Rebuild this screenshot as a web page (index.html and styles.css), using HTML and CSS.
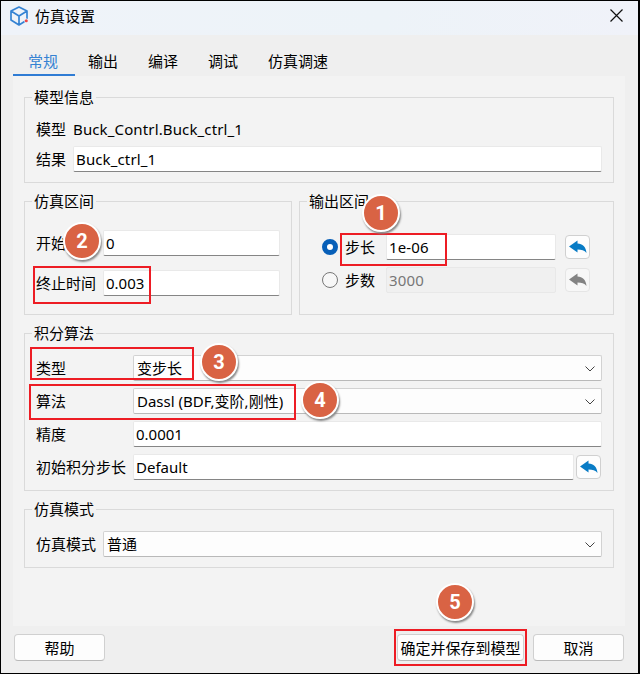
FILE: index.html
```html
<!DOCTYPE html>
<html lang="zh-CN">
<head>
<meta charset="utf-8">
<title>仿真设置</title>
<link rel="stylesheet" href="styles.css">
</head>
<body>
<svg class="defs" width="0" height="0">
  <symbol id="undo" viewBox="0 0 18 14"><path d="M0 6.500 8.500 0.500V3.500C13.500 3.500 17 7 17.500 13C15.500 10.300 12.500 9.500 8.500 9.500V12.500Z"/></symbol>
  <symbol id="chevron" viewBox="0 0 10 6"><path d="M.5.5 5 5 9.500.5" fill="none" stroke="#444"/></symbol>
</svg>
<main class="window">
  <header class="titlebar">
    <svg class="logo" viewBox="0 0 20 20"><path d="M10 1 18 5V14L10 19 2 14V5ZM2 5 10 10 18 5M10 10V19" fill="none" stroke="#3583d3" stroke-width="1.700" stroke-linejoin="round"/><circle cx="17.500" cy="14.800" r="2.300" fill="#eef3f9"/><circle cx="17.300" cy="14.800" r="1.500" fill="#f04545"/></svg>
    <h1>仿真设置</h1>
    <svg class="close" viewBox="0 0 13 13"><path d="M.5.5 12.500 12.500M12.500.5.5 12.500" stroke="#111" stroke-width="1.200"/></svg>
  </header>
  <nav class="tabs"><span class="tab active">常规</span><span class="tab">输出</span><span class="tab">编译</span><span class="tab">调试</span><span class="tab">仿真调速</span></nav>
  <section class="panel">
    <section class="group info">
      <h2>模型信息</h2>
      <div class="row model"><label>模型</label><span class="value">Buck_Contrl.Buck_ctrl_1</span></div>
      <div class="row"><label>结果</label><div class="input value">Buck_ctrl_1</div></div>
    </section>
    <div class="pair">
      <section class="group interval">
        <h2>仿真区间</h2>
        <div class="row"><label>开始时间</label><div class="input">0</div></div>
        <div class="row"><label>终止时间</label><div class="input">0.003</div></div>
      </section>
      <section class="group output">
        <h2>输出区间</h2>
        <div class="row"><i class="radio on"></i><label>步长</label><div class="input value">1e-06</div><span class="undo"><svg><use href="#undo"/></svg></span></div>
        <div class="row"><i class="radio"></i><label>步数</label><div class="input value disabled">3000</div><span class="undo off"><svg><use href="#undo"/></svg></span></div>
      </section>
    </div>
    <section class="group algorithm">
      <h2>积分算法</h2>
      <div class="row"><label>类型</label><div class="select">变步长<svg><use href="#chevron"/></svg></div></div>
      <div class="row"><label>算法</label><div class="select">Dassl (BDF,变阶,刚性)<svg><use href="#chevron"/></svg></div></div>
      <div class="row"><label>精度</label><div class="input">0.0001</div></div>
      <div class="row last"><label>初始积分步长</label><div class="input">Default</div><span class="undo"><svg><use href="#undo"/></svg></span></div>
    </section>
    <section class="group mode">
      <h2>仿真模式</h2>
      <div class="row"><label>仿真模式</label><div class="select">普通<svg><use href="#chevron"/></svg></div></div>
    </section>
  </section>
  <footer class="actions"><span class="button help">帮助</span><span class="button save">确定并保存到模型</span><span class="button">取消</span></footer>
  <div class="mark mark-end"></div><div class="mark mark-step"></div><div class="mark mark-type"></div><div class="mark mark-method"></div><div class="mark mark-save"></div>
  <b class="badge one">1</b><b class="badge two">2</b><b class="badge three">3</b><b class="badge four">4</b><b class="badge five">5</b>
</main>
</body>
</html>
```

FILE: styles.css
```css
* { box-sizing: border-box; }
body { margin: 0; font: 15px/20px "Noto Sans", "Noto Sans CJK SC", sans-serif; color: #000; background: #000; }
.defs { display: none; }
.window { position: relative; width: 640px; height: 674px; border: 1px solid #000; background: #efefef; border-right-width: 2px; overflow: hidden; display: flex; flex-direction: column; }
.titlebar { height: 34px; display: flex; align-items: center; padding: 0 15px 5px 8px; background: linear-gradient(90deg, #eff3f9, #edf3f8 60%, #f0f2f9); flex: none; }
.logo { width: 20px; height: 20px; margin-right: 6px; }
h1, h2 { font: inherit; margin: 0; }
.close { width: 13px; height: 13px; margin-left: auto; }
.tabs { height: 41px; padding: 13px 0 0 12px; display: flex; flex: none; }
.tab { padding: 1px 15px 0; height: 28px; line-height: 24px; }
.active { width: 62px; margin-right: -2px; color: #3682d3; border-bottom: 2px solid #2f7cd4; }
.panel { width: 612px; height: 550px; margin-left: 12px; padding: 21px 11px 0; background: #f3f3f3; flex: none; }
.group { border: 1px solid #dadada; position: relative; padding: 0 11px; }
.group h2 { width: max-content; height: 20px; margin: -11px 0 0 -4px; padding: 0 2px; line-height: 20px; background: #f3f3f3; }
.row { display: flex; align-items: center; height: 26px; }
.row label { flex: none; white-space: nowrap; }
.value { letter-spacing: .13px; }
.input, .select { height: 26px; flex: 1; min-width: 0; padding: 0 2px; line-height: 25px; background: #fff; border: 1px solid #e9e9e9; border-bottom: 1px solid #858585; border-radius: 2px; }
.select { display: flex; padding: 0 6px 0 3px; background: #fdfdfd; border-color: #d2d2d2; border-bottom-color: #b9b9b9; }
.select svg { width: 10px; height: 6px; margin: 10px 0 0 auto; }
.disabled { background: #f0f0f0; border-color: #e8e8e8; color: #777; }
.info { height: 86px; }
.info label { width: 37px; }
.info .model { height: 20px; margin: 12px 0 7px; }
.pair { display: flex; gap: 7px; margin-top: 18px; }
.interval { width: 268px; height: 114px; }
.interval label { width: 67px; }
.interval .row { margin-top: 14px; }
.interval h2 + .row { margin-top: 19px; }
.output { width: 315px; height: 114px; padding: 0 23px 0 22px; }
.output h2 { margin-left: -15px; }
.output .row { margin-top: 7px; }
.output h2 + .row { margin-top: 23px; }
.output label { width: 41px; }
.output .undo { margin-left: 9px; }
.radio { width: 16px; height: 16px; margin-right: 7px; flex: none; border: 1px solid #777; border-radius: 50%; background: #f7f7f7; }
.radio.on { border: 5px solid #075fb8; background: #fff; }
.undo { width: 25px; height: 24px; margin-left: 2px; border: 1px solid #d0d0d0; border-radius: 4px; background: #fdfdfd; flex: none; display: grid; place-items: center; }
.undo svg { width: 18px; height: 14px; fill: #087bc5; }
.off { border-color: #e5e5e5; background: #f7f7f7; }
.off svg { fill: #838383; }
.algorithm { height: 158px; margin-top: 18px; }
.algorithm label { width: 97px; }
.algorithm .row { margin-top: 7px; }
.algorithm h2 + .row { margin-top: 12px; }
.last { margin-right: 1px; }
.mode { height: 59px; margin-top: 18px; }
.mode label { width: 67px; }
.mode .row { margin-top: 12px; }
.actions { display: flex; gap: 9px; padding: 8px 14px 0 13px; }
.button { width: 91px; height: 27px; line-height: 26px; text-align: center; background: #fdfdfd; border: 1px solid #d0d0d0; border-bottom-color: #b9b9b9; border-radius: 4px; white-space: nowrap; }
.help { margin-right: auto; }
.save { width: 127px; }
.mark { position: absolute; border: 2px solid #ed1c24; }
.mark-end { left: 32px; top: 265px; width: 118px; height: 38px; }
.mark-step { left: 339px; top: 232px; width: 107px; height: 33px; }
.mark-type { left: 29px; top: 346px; width: 164px; height: 33px; }
.mark-method { left: 28px; top: 383px; width: 267px; height: 36px; }
.mark-save { left: 393px; top: 628px; width: 133px; height: 37px; }
.badge { position: absolute; width: 38px; height: 38px; border: 2px solid #fff; border-radius: 50%; color: #fff; background: #d96344; font: bold 20px/35px Roboto, sans-serif; text-align: center; box-shadow: 1px 2px 2px #888; }
.one { left: 361px; top: 193px; }
.two { left: 62px; top: 221px; }
.three { left: 199px; top: 342px; }
.four { left: 300px; top: 380px; }
.five { left: 435px; top: 582px; }
```
